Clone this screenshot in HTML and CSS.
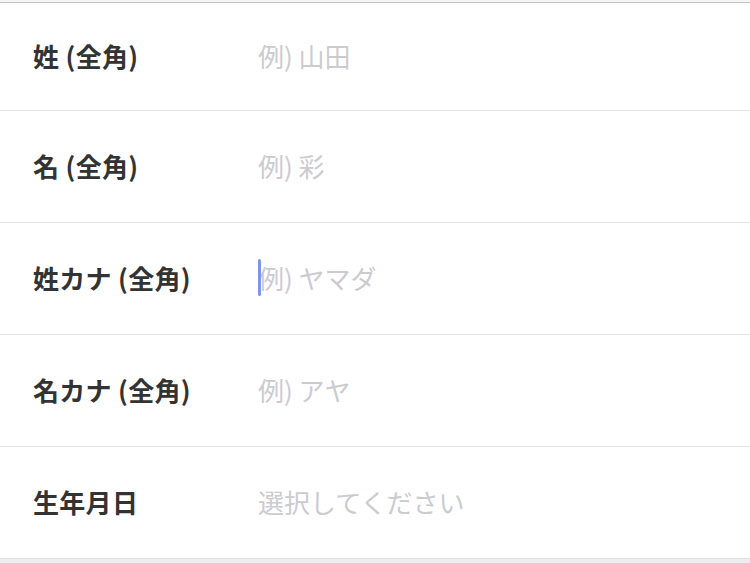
FILE: index.html
```html
<!DOCTYPE html>
<html lang="ja">
  <head>
    <meta charset="UTF-8" />
    <meta name="viewport" content="width=device-width, initial-scale=1.0" />
    <title>会員情報入力</title>
    <link rel="stylesheet" href="styles.css">
  </head>
  <body>
    <div class="nav-edge"></div>

    <!-- Profile Form -->
    <form class="profile-form">
      <label class="form-row first-row">
        <span class="row-label">姓 (全角)</span>
        <span class="row-field">
          <input type="text" class="text-input" placeholder="例) 山田" />
        </span>
      </label>
      <label class="form-row">
        <span class="row-label">名 (全角)</span>
        <span class="row-field">
          <input type="text" class="text-input" placeholder="例) 彩" />
        </span>
      </label>
      <label class="form-row">
        <span class="row-label">姓カナ (全角)</span>
        <span class="row-field">
          <span class="caret"></span>
          <input type="text" class="text-input" placeholder="例) ヤマダ" />
        </span>
      </label>
      <label class="form-row">
        <span class="row-label">名カナ (全角)</span>
        <span class="row-field">
          <input type="text" class="text-input" placeholder="例) アヤ" />
        </span>
      </label>
      <label class="form-row">
        <span class="row-label">生年月日</span>
        <span class="row-field">
          <span class="select-text">選択してください</span>
        </span>
      </label>
    </form>
  </body>
</html>
```

FILE: styles.css
```css
body {
  margin: 0;
  background-color: #ededed;
  font-family: "Noto Sans CJK JP", "Noto Sans", sans-serif;
  overflow: hidden;
}

.nav-edge {
  height: 2px;
  background-color: #f4f4f4;
  border-bottom: 1px solid #c6c6c6;
}

.profile-form {
  background-color: #fff;
}

.form-row {
  display: flex;
  align-items: center;
  height: 112px;
  box-sizing: border-box;
  padding-left: 33px;
  padding-bottom: 3px;
  border-bottom: 1px solid #e3e3e3;
}

.first-row {
  height: 108px;
}

.row-label {
  width: 225px;
  flex-shrink: 0;
  font-size: 26px;
  font-weight: bold;
  letter-spacing: 0.3px;
  color: #333;
}

.row-field {
  position: relative;
  flex: 1;
  display: flex;
  align-items: center;
}

.text-input {
  width: 100%;
  border: none;
  outline: none;
  padding: 0;
  background: transparent;
  font-family: inherit;
  font-size: 26px;
  color: #333;
}

.text-input::placeholder,
.select-text {
  color: #cbcbd0;
}

.select-text {
  font-size: 26px;
}

/* focused caret drawn over the input */
.caret {
  position: absolute;
  left: 0;
  top: 50%;
  width: 3px;
  height: 37px;
  margin-top: -18px;
  border-radius: 2px;
  background-color: #7d97e8;
}
```
